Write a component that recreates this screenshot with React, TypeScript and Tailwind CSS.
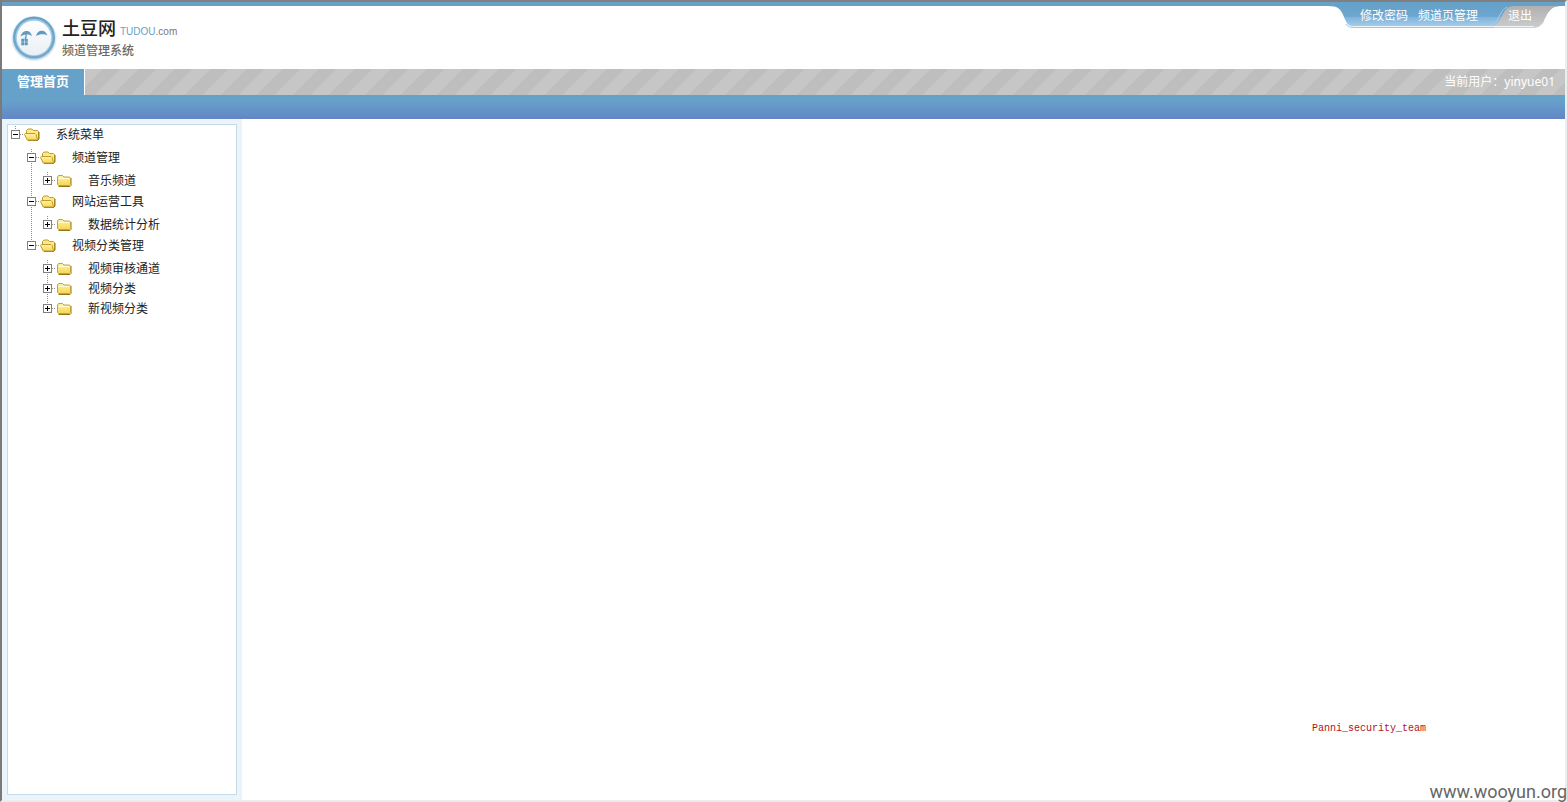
import { useState } from "react";

type TreeNode = {
	id: string;
	label: string;
	children?: TreeNode[];
};

const MENU: TreeNode = {
	id: "root",
	label: "系统菜单",
	children: [
		{
			id: "channel",
			label: "频道管理",
			children: [{ id: "music", label: "音乐频道" }],
		},
		{
			id: "tools",
			label: "网站运营工具",
			children: [{ id: "stats", label: "数据统计分析" }],
		},
		{
			id: "category",
			label: "视频分类管理",
			children: [
				{ id: "review", label: "视频审核通道" },
				{ id: "video", label: "视频分类" },
				{ id: "new-video", label: "新视频分类" },
			],
		},
	],
};

function Logo() {
	return (
		<svg viewBox="0 0 48 48" className="size-12 shrink-0" aria-hidden="true">
			<defs>
				<radialGradient id="logo-glow">
					<stop offset="0.84" stopColor="#9cc3de" />
					<stop offset="1" stopColor="#ffffff" />
				</radialGradient>
				<linearGradient id="logo-ring" x1="0" y1="0" x2="0" y2="1">
					<stop offset="0" stopColor="#68a3c9" />
					<stop offset="1" stopColor="#74a9cd" />
				</linearGradient>
				<linearGradient id="logo-face" x1="0" y1="0" x2="0" y2="1">
					<stop offset="0" stopColor="#ffffff" />
					<stop offset="1" stopColor="#e9eff4" />
				</linearGradient>
			</defs>
			<circle cx="24" cy="24.500" r="23" fill="url(#logo-glow)" />
			<circle cx="24" cy="23.500" r="21" fill="url(#logo-ring)" />
			<circle cx="24" cy="23.500" r="18.600" fill="#a3cbe4" />
			<circle cx="24" cy="24" r="17.200" fill="url(#logo-face)" />
			<path
				d="M10.500 22.500c1.200-4 3.700-5.500 6-5.500s4.500 1.300 5.500 5.300c-1.600-1.500-3.200-1.900-5-1.800-2.200 0-4.200.6-6.500 2zM26 22c1.200-4 3.600-5.200 5.800-5.200s4.400 1.200 5.700 5c-1.700-1.400-3.500-1.700-5.200-1.600-2.100 0-4 .5-6.300 1.800z"
				fill="#5f9abf"
			/>
			<path d="M16 19.500c.3 2 0 4-1 6" fill="none" stroke="#5f9abf" strokeWidth="1.300" />
			<path
				d="M11.500 25h2.500v2.500h-2.500zM15 25h2.500v2.500h-2.500zM11.500 28.500h2.500v2.500h-2.500zM15 28.500h2.500v2.500h-2.500z"
				fill="#5f9abf"
				stroke="#5f9abf"
				strokeWidth="0.600"
			/>
		</svg>
	);
}

function TabShape() {
	return (
		<svg
			viewBox="0 0 232 24"
			className="absolute inset-y-0 right-0 h-6 w-[232px]"
			aria-hidden="true"
		>
			<defs>
				<linearGradient id="tab-blue" x1="0" y1="0" x2="0" y2="1">
					<stop offset="0" stopColor="#66a1ca" />
					<stop offset="0.500" stopColor="#6ea7d0" />
					<stop offset="0.520" stopColor="#7eb3d9" />
					<stop offset="1" stopColor="#a8cdea" />
				</linearGradient>
				<linearGradient id="tab-grey" x1="0" y1="0" x2="0" y2="1">
					<stop offset="0" stopColor="#b0b0b0" />
					<stop offset="1" stopColor="#cbcbcb" />
				</linearGradient>
			</defs>
			<path
				d="M0 0C10 0 13 3 16 11S22 21 28 21H206C213 21 215 16 218 10S225 0 232 0z"
				fill="url(#tab-blue)"
			/>
			<path
				d="M160 21C168 21 171 16 174 10S179 0 186 0H232C225 0 221 4 218 10S213 21 206 21z"
				fill="url(#tab-grey)"
			/>
			<path
				d="M154 20.500C164 20.500 168 17 171 11S175 3 179 1"
				fill="none"
				stroke="#a9cde6"
			/>
			<path d="M18 17C20 20 22 20.500 28 20.500H206" fill="none" stroke="#eef5fa" />
			<path d="M18 18C20 21 22 21.500 28 21.500H166" fill="none" stroke="#9ec6e2" />
			<path d="M166 21.500H206C212 21 214 18 216 15" fill="none" stroke="#cfcfcf" />
		</svg>
	);
}

function Expander({ open }: { open: boolean }) {
	return (
		<svg
			viewBox="0 0 16 20"
			className="h-5 w-4"
			shapeRendering="crispEdges"
			aria-hidden="true"
		>
			<path d="M7.500 1v5" stroke="#8f8f8f" strokeDasharray="1 1" />
			<path d="M12 9.500h4" stroke="#8f8f8f" strokeDasharray="1 1" />
			<rect x="3.500" y="5.500" width="8" height="8" fill="#fff" stroke="#808080" />
			<path d="M5 9.500h5" stroke="#000" />
			{open ? null : <path d="M7.500 7v5" stroke="#000" />}
		</svg>
	);
}

function Folder({ open }: { open: boolean }) {
	return (
		<svg viewBox="0 0 16 16" className="size-4" aria-hidden="true">
			<defs>
				<linearGradient id="folder-fill" x1="0" y1="0" x2="0" y2="1">
					<stop offset="0" stopColor="#fff6a8" />
					<stop offset="1" stopColor="#f6d654" />
				</linearGradient>
			</defs>
			{open ? (
				<>
					<path
						d="M2.500 7V3.500l1.500-1.500h4l1.500 1.500h4l1 1V12l-1 1.500H4.500z"
						fill="#fbe98a"
						stroke="#c39a2c"
					/>
					<path d="M4 13.500h9.500l1.500-1.500V5" fill="none" stroke="#94761f" />
					<path
						d="M.5 7.500L1.300 6.500H11l1 1 1.500 5-.8.500H3.200z"
						fill="url(#folder-fill)"
						stroke="#c39a2c"
					/>
				</>
			) : (
				<>
					<path d="M2.500 13.500h11.500l1-1V5" fill="none" stroke="#94761f" />
					<path
						d="M1.500 11.500V4l1-1.500h4L8 4h5.500l1 1v6.500l-1 1h-11z"
						fill="url(#folder-fill)"
						stroke="#c9a136"
					/>
					<path d="M2.500 5.500h10.500" stroke="#fffbd6" />
				</>
			)}
		</svg>
	);
}

function TreeItem({ node, last }: { node: TreeNode; last: boolean }) {
	const [open, setOpen] = useState(Boolean(node.children));
	return (
		<li className="relative">
			{last ? null : (
				<span className="absolute top-3 -bottom-1 left-[7px] border-l border-dotted border-[#8f8f8f]" />
			)}
			<div className="relative flex h-5 items-center">
				<button
					type="button"
					aria-label={node.label}
					aria-expanded={open}
					onClick={() => setOpen(!open)}
					className="flex items-center"
				>
					<Expander open={open} />
					<Folder open={open} />
				</button>
				<a href="#" className="ml-4 leading-5 whitespace-nowrap">
					{node.label}
				</a>
			</div>
			{open && node.children ? (
				<ul className="pt-[3px] pb-px pl-4">
					{node.children.map((child, i) => (
						<TreeItem
							key={child.id}
							node={child}
							last={i === node.children!.length - 1}
						/>
					))}
				</ul>
			) : null}
		</li>
	);
}

export default function App() {
	return (
		<div className="relative flex h-screen flex-col border-2 border-t-[#808080] border-r-[#ececec] border-b-[#ececec] border-l-[#7a7a7a] bg-white font-['Liberation_Sans','Noto_Sans_CJK_SC',sans-serif] text-xs text-[#222]">
			<header className="flex h-[67px] shrink-0 items-start justify-between border-t-4 border-[#66a1ca]">
				<div className="flex pt-2 pl-2">
					<Logo />
					<div className="ml-1 pt-[5px]">
						<h1 className="flex items-baseline text-lg leading-5 font-medium text-[#222]">
							土豆网
							<span className="ml-1 text-[10px] font-normal text-[#66a1ca]">
								TUDOU<span className="text-[#777]">.com</span>
							</span>
						</h1>
						<p className="text-xs leading-[18px] font-medium text-[#6b6a62]">
							频道管理系统
						</p>
					</div>
				</div>
				<nav className="relative mr-[5px] flex h-6 w-[232px] text-white">
					<TabShape />
					<div className="relative flex w-full gap-[10px] pl-8 leading-5">
						<a href="#">修改密码</a>
						<a href="#">频道页管理</a>
						<a href="#" className="ml-5">
							退出
						</a>
					</div>
				</nav>
			</header>

			<div className="flex h-[26px] shrink-0 justify-between bg-[linear-gradient(135deg,#bebebe_25%,#c6c6c6_25%,#c6c6c6_50%,#bebebe_50%,#bebebe_75%,#c6c6c6_75%)] bg-size-[36px_36px] bg-position-[28px_0px] text-white">
				<a
					href="#"
					className="border-r border-white bg-[#66a1ca] px-[15px] text-[13px] leading-[25px] font-bold"
				>
					管理首页
				</a>
				<p className="pr-[10px] font-['Noto_Sans','Noto_Sans_CJK_SC',sans-serif] leading-[26px]">
					当前用户：yinyue01
				</p>
			</div>
			<div className="h-6 shrink-0 bg-linear-to-b from-[#66a1ca] from-25% to-[#6286c6]" />

			<div className="flex min-h-0 flex-1">
				<aside className="flex w-60 shrink-0 flex-col bg-[#ebf4fa] p-[5px]">
					<ul className="flex-1 overflow-auto border border-[#c5dbe9] bg-white">
						<TreeItem node={MENU} last />
					</ul>
				</aside>
				<main className="flex-1" />
			</div>

			<p className="absolute right-[139px] bottom-[65px] font-['Liberation_Mono',monospace] text-[10px] text-[#b3121b]">
				Panni_security_team
			</p>
			<p className="absolute -right-0.5 -bottom-1.5 font-[Roboto,sans-serif] text-lg text-[#666]">
				www.wooyun.org
			</p>
		</div>
	);
}
